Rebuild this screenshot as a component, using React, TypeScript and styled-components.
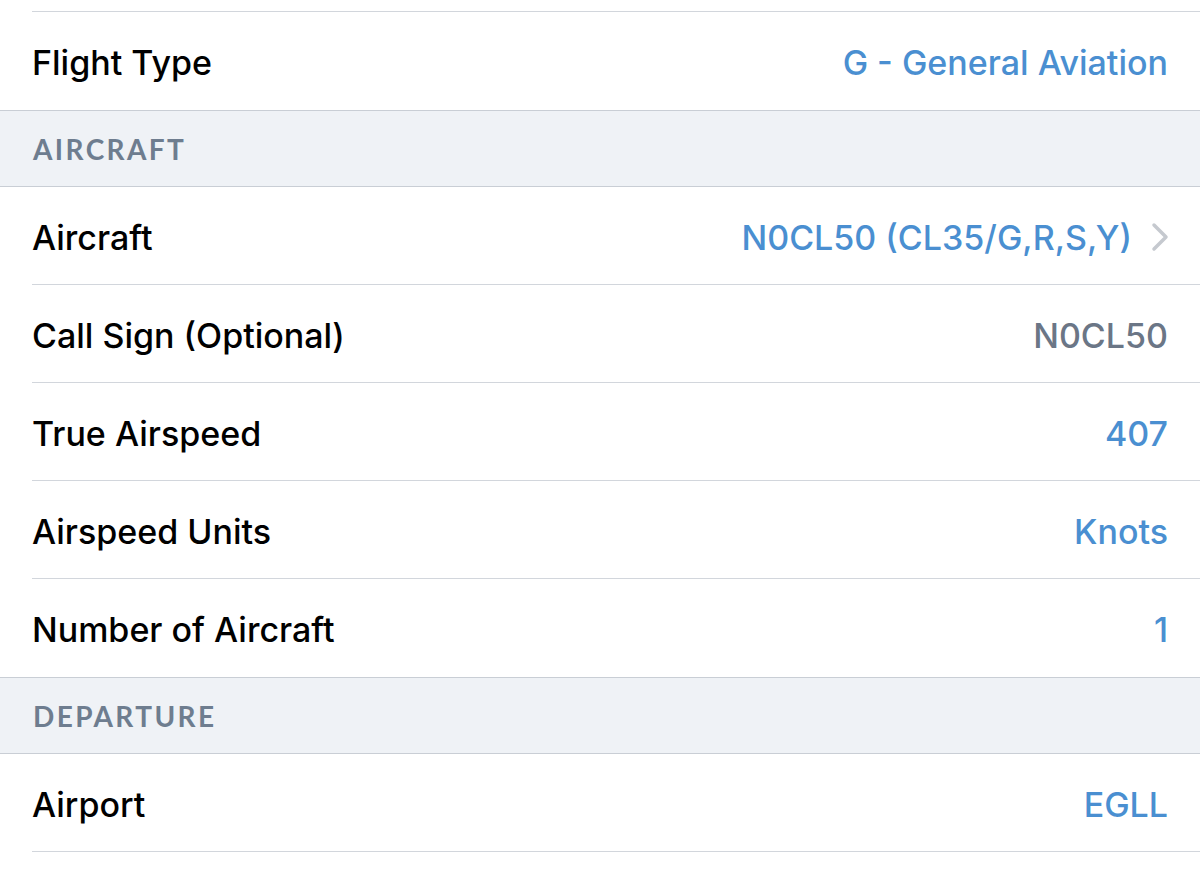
import React from "react";
import styled, { createGlobalStyle } from "styled-components";

const GlobalStyle = createGlobalStyle`
  html, body {
    margin: 0;
    padding: 0;
    background: #ffffff;
  }
  body {
    font-family: Inter, "Liberation Sans", sans-serif;
    -webkit-font-smoothing: antialiased;
  }
`;

type Tone = "link" | "muted";

type Item = {
  label: string;
  value: string;
  tone?: Tone;
  chevron?: boolean;
};

type Section = {
  title?: string;
  items: Item[];
};

const sections: Section[] = [
  {
    items: [{ label: "Flight Type", value: "G - General Aviation" }],
  },
  {
    title: "Aircraft",
    items: [
      { label: "Aircraft", value: "N0CL50 (CL35/G,R,S,Y)", chevron: true },
      { label: "Call Sign (Optional)", value: "N0CL50", tone: "muted" },
      { label: "True Airspeed", value: "407" },
      { label: "Airspeed Units", value: "Knots" },
      { label: "Number of Aircraft", value: "1" },
    ],
  },
  {
    title: "Departure",
    items: [{ label: "Airport", value: "EGLL" }, { label: "", value: "" }],
  },
];

const Chevron = () => (
  <ChevronIcon viewBox="0 0 20 30" aria-hidden>
    <path d="M4 3 L16 15 L4 27" />
  </ChevronIcon>
);

const App = () => {
  return (
    <>
      <GlobalStyle />
      <Page>
        <TopStub>
          <StubLine />
        </TopStub>
        {sections.map((section, si) => (
          <Group key={si}>
            {section.title && <SectionHeader>{section.title}</SectionHeader>}
            {section.items.map((item, ii) => (
              <Row key={ii}>
                <RowInner $divider={ii < section.items.length - 1 || si === sections.length - 1}>
                  <Label>{item.label}</Label>
                  {item.value && (
                    <ValueWrap>
                      <Value $tone={item.tone ?? "link"}>{item.value}</Value>
                      {item.chevron && <Chevron />}
                    </ValueWrap>
                  )}
                </RowInner>
              </Row>
            ))}
          </Group>
        ))}
      </Page>
    </>
  );
};

export default App;

const Page = styled.div`
  width: 1200px;
  height: 880px;
  overflow: hidden;
  background: #ffffff;
`;

const TopStub = styled.div`
  height: 12px;
  padding-left: 32px;
  display: flex;
  align-items: flex-end;
`;

const StubLine = styled.div`
  flex: 1;
  border-bottom: 1px solid #d2d6dc;
`;

const Group = styled.section`
  display: flex;
  flex-direction: column;
`;

const SectionHeader = styled.div`
  height: 77px;
  box-sizing: border-box;
  display: flex;
  align-items: center;
  padding-left: 33px;
  background: #eff2f6;
  border-top: 1px solid #c9ced5;
  border-bottom: 1px solid #c9ced5;
  font-family: Lato, "Open Sans", sans-serif;
  font-weight: 700;
  font-size: 28px;
  letter-spacing: 2.4px;
  text-transform: uppercase;
  color: #6e7d8f;
`;

const Row = styled.div`
  padding-left: 32px;
  background: #ffffff;
`;

const RowInner = styled.div<{ $divider: boolean }>`
  height: 98px;
  box-sizing: border-box;
  display: flex;
  align-items: center;
  justify-content: space-between;
  padding-right: 32px;
  padding-top: 3px;
  border-bottom: 1px solid ${(p) => (p.$divider ? "#d2d6dc" : "transparent")};
`;

const Label = styled.span`
  font-size: 34px;
  font-weight: 500;
  color: #000000;
`;

const ValueWrap = styled.div`
  display: flex;
  align-items: center;
  gap: 18px;
`;

const Value = styled.span<{ $tone: Tone }>`
  font-size: 34px;
  font-weight: 500;
  color: ${(p) => (p.$tone === "muted" ? "#6b7686" : "#4a8fd1")};
`;

const ChevronIcon = styled.svg`
  width: 20px;
  height: 30px;
  margin-right: -2px;
  fill: none;
  stroke: #c5c9cf;
  stroke-width: 3.5;
  stroke-linecap: round;
  stroke-linejoin: round;
`;
